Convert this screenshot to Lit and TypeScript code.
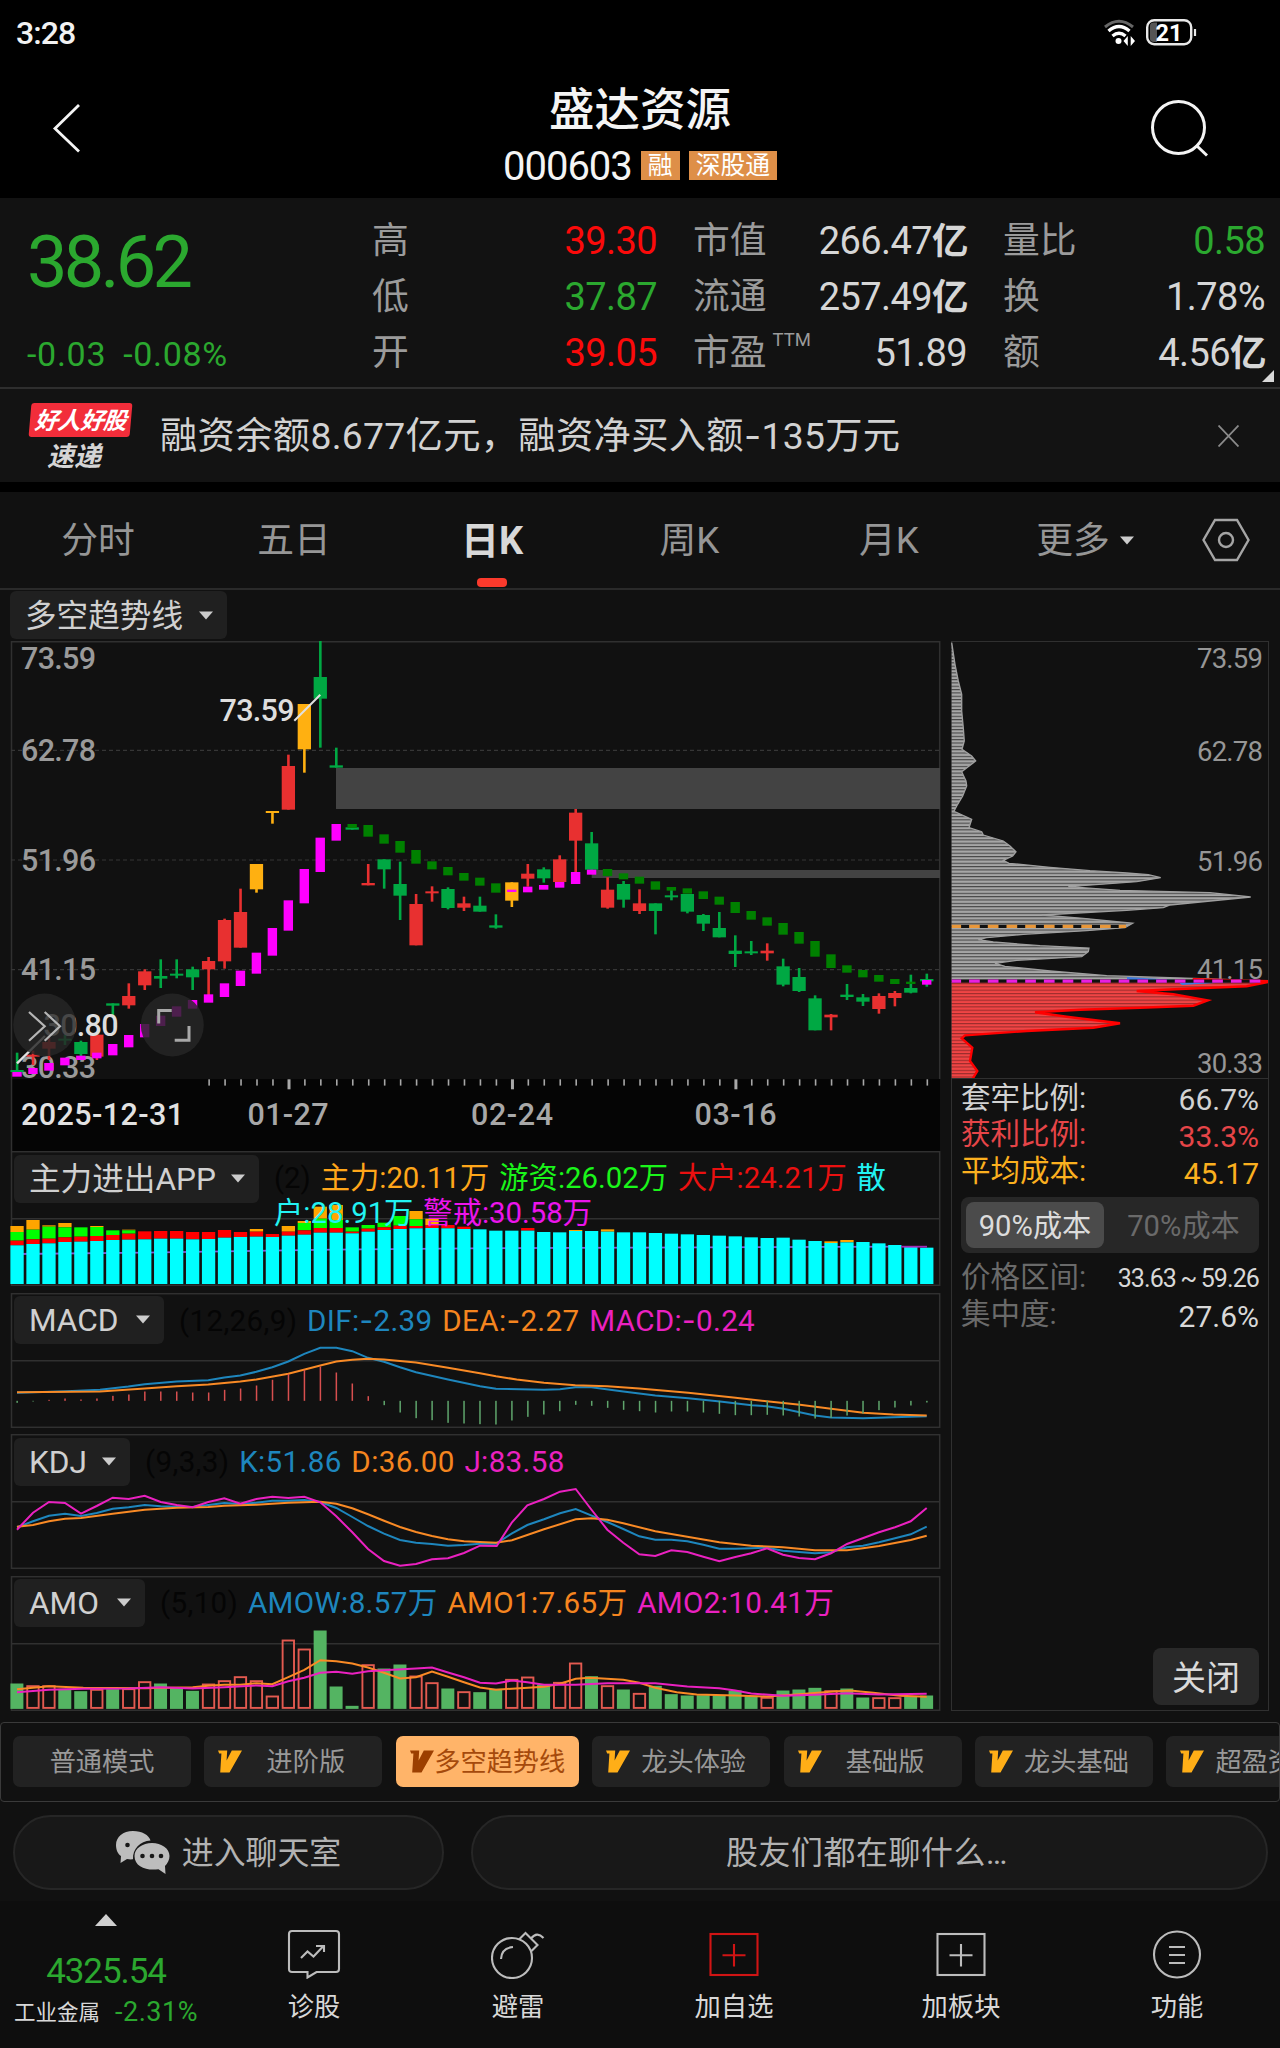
import { LitElement, html, css, svg } from "lit";
import { customElement } from "lit/decorators.js";

type Pt = [number, number];
type Candle = [string, number, number, number, number];

const TONE: Record<string, string> = { r: "#e83030", g: "#00a843", y: "#ffb011", m: "#ff00ff", d: "#008000" };

/* Chart series are stored in thirds of a pixel; each chart has its own vertical origin. */
const cx = (n: number) => 17 + n * 15.96;
const line = (pts: Pt[], y0: number) => pts.map(([x, y]) => `${(x / 3).toFixed(1)},${(y0 + y / 3).toFixed(1)}`).join(" ");

/* tone, high, body top, body bottom, low */
const CANDLES: Candle[] = [
  ["g", 1268, 1320, 1326, 1326], ["r", 1262, 1274, 1280, 1305], ["r", 1222, 1236, 1256, 1290], ["g", 1215, 1226, 1232, 1245],
  ["g", 1232, 1236, 1272, 1280], ["r", 1214, 1214, 1280, 1290], ["g", 1120, 1120, 1127, 1160], ["r", 1060, 1098, 1126, 1136],
  ["r", 1018, 1024, 1066, 1080], ["g", 988, 1038, 1046, 1074], ["g", 988, 1031, 1037, 1045], ["g", 1010, 1018, 1042, 1080],
  ["r", 981, 993, 1018, 1095], ["r", 866, 870, 994, 1016], ["r", 776, 846, 953, 953], ["y", 702, 702, 778, 788],
  ["y", 543, 543, 549, 581], ["r", 374, 408, 539, 539], ["y", 222, 222, 358, 428], ["g", 33, 141, 206, 353],
  ["g", 353, 406, 413, 413], ["g", 592, 592, 599, 599], ["r", 702, 759, 766, 766], ["g", 688, 688, 718, 776],
  ["g", 695, 762, 797, 870], ["r", 792, 822, 946, 946], ["r", 769, 784, 790, 815], ["g", 772, 777, 834, 838],
  ["r", 800, 820, 833, 843], ["g", 800, 827, 845, 845], ["g", 853, 886, 893, 896], ["y", 757, 757, 812, 831],
  ["r", 702, 731, 746, 770], ["g", 712, 718, 745, 758], ["r", 676, 688, 756, 756], ["r", 537, 548, 632, 726],
  ["g", 606, 640, 719, 719], ["r", 742, 779, 833, 836], ["g", 753, 762, 809, 833], ["r", 778, 820, 843, 852],
  ["g", 820, 820, 843, 913], ["g", 777, 796, 802, 811], ["g", 792, 792, 845, 850], ["g", 852, 855, 881, 903],
  ["g", 846, 894, 922, 922], ["g", 916, 962, 972, 1011], ["g", 933, 964, 970, 975], ["r", 940, 962, 970, 992],
  ["g", 986, 1009, 1064, 1069], ["g", 1014, 1041, 1083, 1086], ["g", 1096, 1105, 1201, 1201], ["r", 1152, 1154, 1162, 1201],
  ["g", 1062, 1094, 1101, 1110], ["g", 1092, 1102, 1115, 1128], ["r", 1090, 1098, 1137, 1151], ["r", 1083, 1089, 1104, 1129],
  ["g", 1034, 1074, 1088, 1090], ["g", 1031, 1047, 1054, 1070],
];

/* top and bottom of each trend block */
const TREND: Pt[] = [
  [1326, 1340], [1314, 1332], [1299, 1322], [1283, 1306], [1277, 1290], [1268, 1285], [1242, 1276], [1215, 1252], [1182, 1222],
  [1157, 1188], [1129, 1160], [1110, 1136], [1093, 1118], [1060, 1101], [1022, 1068], [968, 1031], [894, 977], [811, 902],
  [717, 820], [623, 726], [582, 632], [582, 594], [585, 620], [613, 641], [633, 668], [660, 701], [694, 718], [711, 736],
  [729, 752], [743, 767], [760, 788], [779, 786], [770, 787], [765, 779], [756, 773], [726, 762], [719, 734], [717, 738],
  [730, 748], [740, 761], [754, 779], [771, 782], [775, 791], [784, 807], [800, 824], [816, 849], [843, 869], [862, 887],
  [879, 914], [906, 941], [933, 980], [973, 1014], [1006, 1028], [1020, 1042], [1035, 1055], [1047, 1062], [1055, 1062], [1050, 1064],
];
const trendTone = (n: number) => (n <= 20 || (n >= 31 && n <= 36) || n === 57 ? "m" : "d");

/* tops of the stacked main-force layers: yellow, green, red, cyan */
const FLOW: number[][] = [
  [258, 276, 302, 316], [240, 269, 298, 312], [256, 260, 296, 310], [249, 262, 292, 306], [262, 262, 290, 305], [258, 261, 288, 303],
  [271, 271, 285, 300], [269, 271, 281, 299], [274, 274, 274, 298], [273, 273, 273, 296], [273, 273, 273, 296], [276, 276, 276, 298],
  [276, 276, 276, 297], [270, 270, 270, 293], [276, 276, 276, 291], [267, 275, 275, 290], [282, 282, 282, 291], [258, 275, 275, 287],
  [243, 249, 271, 284], [200, 236, 264, 278], [195, 240, 264, 278], [262, 262, 275, 280], [255, 255, 266, 275], [248, 248, 262, 270],
  [228, 228, 257, 267], [213, 238, 258, 265], [236, 255, 255, 264], [255, 255, 255, 265], [260, 260, 260, 267], [268], [272], [272],
  [264, 264, 264, 272], [276], [277], [270, 273], [273], [268, 275], [277], [277], [279], [281], [283], [285], [287], [289], [292],
  [294], [293], [299], [303], [304, 309], [300, 307], [306], [310], [315], [319], [323],
];

const HIST = [
  787, 783, 778, 774, 777, 774, 766, 762, 753, 753, 753, 756, 756, 748, 744, 735, 718, 700, 688, 678, 696, 729, 767, 794, 816, 833,
  839, 847, 849, 851, 852, 840, 829, 822, 812, 793, 796, 802, 808, 812, 816, 813, 813, 816, 820, 824, 824, 823, 825, 828, 834, 832,
  825, 819, 809, 801, 795, 786,
];
const DIF: Pt[] = [[51, 757], [200, 752], [300, 748], [385, 738], [434, 731], [530, 723], [625, 719], [673, 711], [721, 705], [769, 694], [817, 680], [865, 663], [913, 640], [961, 622], [1009, 622], [1057, 632], [1104, 652], [1152, 664], [1200, 680], [1248, 695], [1344, 717], [1440, 737], [1488, 745], [1632, 748], [1680, 746], [1726, 740], [1774, 740], [1870, 753], [1966, 765], [2065, 773], [2160, 783], [2255, 794], [2300, 797], [2350, 805], [2445, 825], [2493, 831], [2590, 833], [2680, 830], [2780, 827]];
const DEA: Pt[] = [[51, 755], [300, 753], [434, 744], [530, 737], [625, 732], [721, 723], [769, 717], [865, 700], [961, 675], [1009, 663], [1057, 658], [1104, 655], [1152, 657], [1248, 666], [1344, 682], [1440, 698], [1488, 707], [1550, 717], [1632, 727], [1726, 734], [1822, 737], [1918, 744], [2065, 757], [2200, 771], [2300, 782], [2400, 793], [2493, 805], [2590, 817], [2680, 822], [2780, 825]];

const KLINE: Pt[] = [[51, 292], [99, 274], [147, 257], [195, 251], [243, 258], [290, 249], [338, 236], [386, 232], [434, 225], [482, 229], [530, 230], [578, 231], [625, 225], [673, 219], [721, 222], [769, 218], [817, 212], [865, 212], [913, 210], [961, 216], [1009, 234], [1057, 261], [1104, 288], [1152, 311], [1200, 330], [1248, 338], [1296, 342], [1344, 347], [1392, 345], [1440, 341], [1488, 341], [1536, 310], [1582, 285], [1632, 268], [1680, 250], [1727, 237], [1775, 257], [1822, 276], [1870, 297], [1918, 319], [1966, 329], [2014, 329], [2062, 334], [2110, 344], [2158, 356], [2206, 356], [2254, 355], [2301, 353], [2349, 362], [2397, 366], [2445, 370], [2493, 367], [2541, 352], [2589, 347], [2637, 337], [2685, 325], [2732, 313], [2780, 290]];
const DLINE: Pt[] = [[51, 290], [99, 285], [147, 274], [195, 266], [243, 264], [338, 251], [434, 239], [530, 233], [625, 231], [673, 227], [769, 224], [865, 218], [961, 215], [1009, 221], [1057, 235], [1104, 253], [1152, 272], [1200, 291], [1248, 306], [1296, 318], [1344, 328], [1392, 334], [1488, 338], [1536, 331], [1632, 298], [1727, 268], [1775, 265], [1822, 269], [1870, 280], [1966, 304], [2062, 320], [2158, 337], [2254, 347], [2349, 352], [2445, 361], [2541, 361], [2589, 355], [2637, 348], [2732, 330], [2780, 317]];
const JLINE: Pt[] = [[51, 299], [99, 248], [147, 216], [195, 219], [243, 251], [290, 228], [338, 203], [386, 207], [434, 197], [482, 216], [530, 225], [578, 232], [625, 216], [673, 205], [721, 221], [769, 207], [817, 200], [865, 204], [913, 200], [961, 217], [1009, 259], [1057, 307], [1104, 357], [1152, 393], [1200, 407], [1248, 402], [1296, 388], [1344, 385], [1392, 369], [1440, 347], [1490, 348], [1536, 277], [1582, 226], [1632, 207], [1680, 185], [1727, 177], [1775, 240], [1822, 299], [1870, 338], [1918, 373], [1966, 378], [2014, 361], [2062, 366], [2110, 380], [2158, 394], [2206, 381], [2254, 370], [2301, 355], [2349, 374], [2397, 384], [2445, 388], [2493, 370], [2541, 342], [2637, 307], [2685, 292], [2732, 274], [2780, 234]];

const AMO = "g759 r767 r767 g775 g782 r778 g776 r776 r755 g759 g772 g781 r762 r752 r740 r752 r798 r630 r657 g600 g768 g826 r704 g714 g702 r738 r758 g774 r785 g785 g775 r748 r741 g762 r757 r699 g737 r767 g777 r790 g766 g791 g795 g794 g794 g780 g797 r802 g780 g777 g772 r782 g774 g801 r803 r803 g797 g795".split(" ");
const AMO1: Pt[] = [[51, 776], [147, 767], [250, 772], [434, 773], [578, 770], [625, 766], [673, 763], [721, 763], [769, 758], [817, 761], [865, 740], [913, 718], [961, 689], [1009, 692], [1057, 699], [1104, 711], [1152, 727], [1200, 744], [1248, 740], [1296, 723], [1344, 739], [1392, 755], [1440, 771], [1488, 778], [1560, 773], [1632, 769], [1680, 760], [1727, 745], [1770, 742], [1870, 748], [1918, 757], [1966, 772], [2030, 785], [2090, 792], [2206, 795], [2300, 798], [2397, 791], [2500, 783], [2550, 780], [2620, 787], [2700, 796], [2780, 799]];
const AMO2: Pt[] = [[51, 785], [147, 778], [250, 775], [386, 774], [482, 770], [578, 774], [673, 770], [769, 765], [817, 767], [865, 752], [913, 742], [961, 727], [1009, 724], [1057, 730], [1104, 722], [1152, 719], [1248, 714], [1296, 711], [1344, 726], [1392, 740], [1440, 757], [1488, 759], [1536, 750], [1582, 755], [1632, 763], [1727, 763], [1822, 758], [1966, 758], [2062, 768], [2158, 773], [2206, 780], [2254, 789], [2350, 796], [2445, 793], [2541, 788], [2637, 792], [2780, 790]];

const CHIPS_GRAY: Pt[] = [[35, 35], [45, 100], [55, 150], [65, 190], [65, 240], [70, 290], [73, 330], [66, 355], [95, 375], [107, 390], [65, 422], [78, 450], [80, 465], [68, 495], [50, 525], [42, 541], [95, 565], [87, 590], [125, 602], [130, 612], [190, 630], [210, 645], [228, 662], [218, 675], [190, 688], [207, 697], [330, 709], [450, 719], [560, 726], [625, 731], [662, 740], [590, 752], [385, 767], [540, 778], [810, 785], [932, 798], [690, 822], [670, 830], [560, 838], [305, 852], [430, 862], [578, 877], [555, 890], [440, 899], [250, 910], [140, 920], [115, 926], [160, 933], [300, 944], [447, 951], [445, 962], [425, 977], [230, 988], [165, 997], [195, 1006], [330, 1020], [500, 1034], [760, 1042], [985, 1050], [35, 1050]];
const CHIPS_RED: Pt[] = [[985, 1053], [920, 1066], [720, 1074], [590, 1080], [700, 1090], [803, 1108], [760, 1124], [600, 1130], [420, 1136], [285, 1144], [380, 1157], [540, 1177], [460, 1190], [260, 1200], [75, 1213], [65, 1222], [97, 1250], [90, 1290], [112, 1320], [97, 1345]];
const side = (pts: Pt[]) => pts.map(([x, y]) => `${(940 + x / 3).toFixed(1)},${(630 + y / 3).toFixed(1)}`).join(" ");

const AXIS: [string, number, number][] = [
  ["73.59", 669.3, 666.7], ["62.78", 761.3, 760.3], ["51.96", 870.7, 870.3], ["41.15", 980.3, 978.3], ["30.33", 1078.3, 1072.3],
];

const bar = (n: number, top: number, bottom: number, fill: string) =>
  svg`<rect x=${cx(n) - 6.6} y=${1140 + top / 3} width="13.3" height=${(bottom - top) / 3} fill=${fill}></rect>`;

const flowBar = (v: number[], n: number) => {
  const edges = v.length === 4 ? v : v.length === 2 ? [v[0], v[1], v[1], v[1]] : [v[0], v[0], v[0], v[0]];
  const fills = ["#ffa500", "#00ff00", "#ff0000", "#00ffff"];
  return edges.map((t, i) => {
    const b = i < 3 ? edges[i + 1] : 432;
    return b > t ? bar(n, t, b, fills[i]) : null;
  });
};

const caret = html`<svg class="caret" viewBox="0 0 14 9"><path d="M0 .5H14L7 8.5Z" fill="currentColor" /></svg>`;
const minus = html`<span class="minus">-</span>`;

@customElement("kline-chart")
class KlineChart extends LitElement {
  static styles = css`
    :host { display: block; height: 510px; }
    svg { display: block; }
    text { font-family: Roboto, "Noto Sans CJK SC", sans-serif; font-size: 30.5px; font-weight: 500; }
  `;
  render() {
    return html`<svg width="931" height="510" viewBox="10 641 931 510">
      <rect x="11" y="1079" width="929" height="72" fill="#050505" />
      <path d="M11.5 1151V641.7H939.7V1079" fill="none" stroke="#303030" stroke-width="1.5" />
      ${[750.3, 860, 969.7].map((y) => svg`<line x1="11" x2="939" y1=${y} y2=${y} stroke="#363636" stroke-width="1.2" stroke-dasharray="4 3"></line>`)}
      ${AXIS.map(([t, y]) => svg`<text x="21" y=${y} textLength="75" fill="#9a9a9a">${t}</text>`)}
      <rect x="336" y="768" width="604" height="41" fill="#434343" />
      <rect x="591.7" y="870" width="348.3" height="8" fill="#434343" />
      ${CANDLES.map(
        ([c, hi, t, b, lo], n) => svg`<g fill=${TONE[c]}>
          <rect x=${cx(n) - 1.2} y=${630 + hi / 3} width="2.6" height=${(lo - hi) / 3}></rect>
          <rect x=${cx(n) - 6.6} y=${630 + t / 3} width="13.3" height=${(b - t) / 3}></rect></g>`
      )}
      ${TREND.map(
        ([t, b], n) => svg`<rect x=${cx(n) - 4.7} y=${630 + t / 3} width="9.4" height=${(b - t) / 3} fill=${TONE[trendTone(n)]}></rect>`
      )}
      <text x="219.5" y="720.7" textLength="75" fill="#dedede">73.59</text>
      <path d="M294.3 720.7L320.3 694.7" stroke="#e0e0e0" stroke-width="2" />
      <text x="43.5" y="1036" textLength="75" fill="#dedede">30.80</text>
      <path d="M17 1063.3L45 1036" stroke="#e0e0e0" stroke-width="2.4" />
      <circle cx="44.7" cy="1025" r="31.5" fill="#262626" fill-opacity=".82" />
      <circle cx="172.3" cy="1025" r="31.5" fill="#262626" fill-opacity=".82" />
      <path d="M29 1012L44.7 1026.3L29 1040.7M44.7 1012L60 1026.3L44.7 1040.7" fill="none" stroke="#b5b5b5" stroke-width="2.2" />
      <path d="M171.7 1010.5H158.7V1023.5M189 1026V1040.3H174.7" fill="none" stroke="#a8a8a8" stroke-width="3" />
      ${CANDLES.map((_, n) => {
        const major = n === 17 || n === 31 || n === 45;
        return n < 12 ? null : svg`<rect x=${cx(n) - (major ? 0.8 : 0.2)} y="1079.3" width=${major ? 3 : 1.6} height=${major ? 10 : 6.3} fill="#a8a8a8"></rect>`;
      })}
      <text x="21" y="1125.3" textLength="163" fill="#e2e2e2" font-weight="600">2025-12-31</text>
      <text x="247.5" y="1125.3" textLength="81" fill="#a8a8a8">01-27</text>
      <text x="471" y="1125.3" textLength="82" fill="#a8a8a8">02-24</text>
      <text x="694.5" y="1125.3" textLength="82" fill="#a8a8a8">03-16</text>
    </svg>`;
  }
}

@customElement("chip-chart")
class ChipChart extends LitElement {
  static styles = css`
    :host { display: block; height: 438px; }
    svg { display: block; }
    text { font-family: Roboto, sans-serif; font-size: 27.5px; }
  `;
  render() {
    return html`<svg width="318" height="438" viewBox="951 641 318 438">
      <defs>
        <pattern id="hg" width="4" height="3.34" patternUnits="userSpaceOnUse"><rect width="4" height="3.34" fill="#a6a6a6" /><rect width="4" height="1.1" fill="#474747" /></pattern>
        <pattern id="hr" width="4" height="3.34" patternUnits="userSpaceOnUse"><rect width="4" height="3.34" fill="#f04545" /><rect width="4" height="1.1" fill="#9a2c2c" /></pattern>
      </defs>
      <polygon points=${side(CHIPS_GRAY)} fill="url(#hg)" />
      <polyline points=${side(CHIPS_GRAY.slice(0, -1))} fill="none" stroke="#a0a0a0" stroke-width="1.3" />
      <polygon points=${side([[35, 1053], ...CHIPS_RED, [35, 1345]])} fill="url(#hr)" />
      ${AXIS.map(([t, , y]) => svg`<text x="1197" y=${y} textLength="66" fill="#969696">${t}</text>`)}
      <polyline points=${side(CHIPS_RED)} fill="none" stroke="#ff0000" stroke-width="2.4" />
      <path d="M1127 976L1193 980H1127Z M1178 981L1232 981L1182 984Z" fill="#3d7be0" />
      <path d="M1193 977.5L1268.5 979.5V981.5L1193 979.5Z" fill="#ff0000" stroke="#ff0000" />
      <path d="M951.7 925.3H1126" stroke="#111" stroke-width="3.2" />
      <path d="M951.7 925.3H1126" stroke="#e8973a" stroke-width="3.2" stroke-dasharray="10.7 8" stroke-dashoffset="1.3" />
      <path d="M951.7 980.2H1260" stroke="#111" stroke-width="3.2" />
      <path d="M951.7 980.2H1268" stroke="#e81fe0" stroke-width="3.2" stroke-dasharray="10.7 8" stroke-dashoffset="1.3" />
    </svg>`;
  }
}

@customElement("app-root")
class AppRoot extends LitElement {
  static styles = css`
    :host { display: block; width: 1280px; height: 2048px; overflow: hidden; background: #111; color: #d2d2d2;
      font-family: Roboto, "Noto Sans CJK SC", sans-serif; line-height: 1; white-space: nowrap; }
    * { box-sizing: border-box; }
    svg { display: block; flex: none; }
    .minus { font-family: Inter, Roboto, sans-serif; }
    .status { height: 66px; background: #000; display: flex; align-items: center; padding: 0 83px 0 16px; color: #f2f2f2; }
    .clock { flex: 1; font-size: 32px; font-weight: 500; letter-spacing: -0.9px; }
    .header { height: 132px; background: #000; display: grid; grid-template-columns: 130px 1fr 130px; color: #f4f4f4; }
    .heading { display: flex; flex-direction: column; align-items: center; padding-top: 20px; }
    .name { font-size: 45.5px; height: 51px; line-height: 50px; font-weight: 500; }
    .code { display: flex; align-items: center; height: 60px; gap: 9px; }
    .num { font-size: 40px; letter-spacing: -1px; }
    .tag { background: #de8f48; font-size: 24.8px; line-height: 30px; height: 29px; padding: 0 7px; color: #fff; margin-top: -3px; }
    .quote { height: 189px; background: #121212; display: grid; grid-template-columns: 345px 312px 310px 298px; padding-right: 15px; }
    .price { padding: 31px 0 0 27px; color: #2ba82f; }
    .last { font-size: 72px; height: 68px; line-height: 68px; letter-spacing: -3.7px; font-weight: 450; }
    .chg { display: flex; gap: 17px; font-size: 34px; margin-top: 40px; line-height: 34px; height: 34px; letter-spacing: 0.7px; }
    .grid { display: grid; grid-template-rows: repeat(3, 56px); padding-top: 15px; }
    .kv { display: flex; align-items: center; justify-content: space-between; font-size: 36.8px; color: #9b9b9b; }
    .kv.a { padding-left: 27px; }
    .kv.b { padding-left: 36px; }
    .kv b { font-weight: 450; font-size: 38px; color: #d6d6d6; letter-spacing: -0.6px; }
    .kv i { font-style: normal; font-size: 36.5px; font-weight: 700; letter-spacing: 0; margin-right: -1.5px; }
    .kv sup { font-size: 18.5px; align-self: flex-start; margin: 6px auto 0 6px; }
    .kv .up { color: #fb0a0a; }
    .kv .down { color: #2ba82f; }
    .corner { width: 12px; height: 12px; margin: -17px 6px 5px auto; }
    .notice { height: 95px; border-top: 2px solid #2e2e2e; display: flex; align-items: center; padding: 0 41px 0 28px; background: #131313; }
    .promo { width: 104px; display: flex; flex-direction: column; align-items: center; font-family: "Noto Sans CJK SC"; font-weight: 700; font-style: italic; }
    .promo-a { background: #f22d3a; color: #fff; width: 101px; height: 34px; line-height: 32px; font-size: 23.5px; text-align: center; letter-spacing: -0.6px; transform: skewX(-5deg); border-radius: 3px; }
    .promo-b { font-size: 27px; height: 31px; line-height: 35px; margin-right: 12px; color: #d5d5d5; }
    .msg { flex: 1; font-size: 37.3px; padding: 2px 0 0 28px; letter-spacing: 0.3px; }
    .tabs { height: 108px; border-top: 10px solid #000; border-bottom: 2px solid #2a2a2a; display: grid; grid-template-columns: 196px 196px 200px 195px 204px 180px 109px; color: #969696; font-size: 36.8px; }
    .tab { display: flex; flex-direction: column; align-items: center; padding-top: 31px; }
    .tab.row { flex-direction: row; align-items: flex-start; justify-content: center; gap: 10px; padding-left: 8px; }
    .tab.row .caret { margin-top: 13px; }
    .tab.on { color: #d8d8d8; font-weight: 700; font-size: 38px; line-height: 37px; }
    .tab.on::after { content: ""; width: 30px; height: 9px; border-radius: 4px; background: #fb3a2c; margin-top: 18px; }
    .caret { width: 14px; height: 9px; color: #ccc; }
    .picker { display: flex; align-items: center; justify-content: space-between; background: #202020; border-radius: 6px; color: #d0d0d0; height: 48px; font-size: 31.6px; padding: 0 14px 0 15px; }
    .picker span { padding-top: 3px; }
    .main-pick { margin: 1px 0 2px 10px; width: 217px; }
    .body { display: grid; grid-template-columns: 931px 318px; gap: 10px; padding-left: 10px; height: 1070px; }
    .left { display: flex; flex-direction: column; gap: 6.6px; }
    .panel { display: grid; width: 931px; height: 135px; }
    .panel > * { grid-area: 1 / 1; }
    kline-chart { margin-bottom: -6.6px; }
    .bar { display: flex; align-items: flex-start; padding: 3.5px 0 0 4px; }
    .bar .picker { margin-right: 15px; padding: 0 14px 1px 15px; flex: none; }
    .w1 { width: 245px; } .w2 { width: 150px; } .w3 { width: 116px; } .w4 { width: 131px; }
    .legend { font-size: 29.3px; line-height: 35px; padding-top: 6px; color: #050505; letter-spacing: 0.02px; word-spacing: 2.6px; }
    .legend.p { padding-top: 7px; font-size: 29.6px; letter-spacing: 0.35px; word-spacing: 2px; }
    .c1 { color: #1e86bd; } .c2 { color: #f5851f; } .c3 { color: #ea21c0; }
    .f1 { color: #ffa61a; } .f2 { color: #1af51a; } .f3 { color: #ea1010; } .f4 { color: #22f3f3; } .f5 { color: #ec14ec; }
    .right { border: 1.5px solid #303030; height: 1070px; display: flex; flex-direction: column; margin-left: 0; }
    .right chip-chart { border-bottom: 1.5px solid #303030; height: 437px; overflow: hidden; margin-left: -1px; }
    .stats { display: flex; flex-direction: column; padding: 1px 9px 0 9px; flex: 1; }
    .st { display: flex; justify-content: space-between; align-items: center; height: 36.8px; font-size: 29.5px; }
    .st b { font-weight: 450; font-size: 30px; padding-top: 4px; }
    .st.red { color: #e64548; } .st.gold { color: #fbb01f; }
    .st.dim span { color: #6a6a6a; } .st.dim b { color: #d8d8d8; }
    .st b.s { font-size: 25px; letter-spacing: -0.9px; word-spacing: -1px; padding-top: 2px; }
    .seg { display: grid; grid-template-columns: 138px 1fr; background: #272727; border-radius: 8px; height: 56px; margin: 7px 0 6px; padding: 5px; font-size: 29.2px; color: #6a6a6a; }
    .seg div { display: flex; align-items: center; justify-content: center; border-radius: 8px; padding: 2px 0 0 9px; }
    .seg .on { background: #4b4b4b; color: #dcdcdc; padding-left: 0; }
    .close { margin: auto 0 5px auto; width: 106px; height: 57px; border-radius: 8px; background: #292929; font-size: 34px; display: flex; align-items: center; justify-content: center; color: #dadada; padding-top: 2px; }
    .modes { margin-top: 11px; height: 80px; border: 1.5px solid #3a3a3a; border-radius: 4px; display: flex; align-items: center; gap: 13.4px; padding: 0 0 1px 12px; overflow: hidden; }
    .mode { flex: none; width: 178px; height: 51px; border-radius: 7px; background: #222; color: #999; font-size: 26.2px; display: flex; align-items: center; }
    .mode span { flex: 1; text-align: center; padding-top: 2px; }
    .mode svg { margin: 0 -13px 0 14px; color: #ffae17; width: 24px; }
    .mode.on { width: 183px; background: #ffb469; color: #a54a0c; }
    .mode.on svg { color: #9c3f00; }
    .chat { display: grid; grid-template-columns: 431px 797px; gap: 27px; padding: 13px 12px 0 13px; height: 99px; }
    .pill { height: 75px; border: 2px solid #262626; border-radius: 38px; background: #181818; display: flex; align-items: center; justify-content: center; gap: 12px; font-size: 31.9px; color: #b2b2b2; }
    .pill span { padding-top: 3px; }
    .pill.b { letter-spacing: 0.6px; padding-right: 5px; }
    .nav { height: 147px; background: #0e0e0e; display: grid; grid-template-columns: 212px 204px 204px 228px 226px 206px; color: #d8d8d8; }
    .idx { display: flex; flex-direction: column; align-items: center; padding-top: 13px; }
    .idx strong { font-size: 35px; font-weight: 400; color: #2ba82f; letter-spacing: -1.1px; margin-top: 28px; height: 36px; }
    .idx p { margin: 9px 0 0; display: flex; align-items: center; gap: 15px; font-size: 21.5px; }
    .idx p span { font-size: 27px; color: #2ba82f; letter-spacing: 0.5px; }
    .item { display: flex; flex-direction: column; align-items: center; font-size: 26.3px; padding-top: 26px; gap: 15px; }
  `;

  private panelFrame(y: number) {
    return svg`<rect x="11.5" y=${y + 0.7} width="928.2" height="133.6" fill="none" stroke="#303030" stroke-width="1.5"></rect>
      <line x1="11" x2="940" y1=${y + 67.7} y2=${y + 67.7} stroke="#303030" stroke-width="1.5"></line>`;
  }

  private flow() {
    return html`<div class="panel">
      <svg width="931" height="135" viewBox="10 1151 931 135">
        ${this.panelFrame(1151)}
        <polyline points=${line([[51, 342], [433, 338], [1000, 329], [1410, 325], [2700, 320]], 1140)} fill="none" stroke="#8a55d8" stroke-width="1.8" />
        ${FLOW.map(flowBar)}
        <path d="M901 1246.7H927" stroke="#a52ab5" stroke-width="1.8" />
      </svg>
      <div class="bar">
        <div class="picker w1"><span>主力进出APP</span>${caret}</div>
        <div class="legend">(2) <span class="f1">主力:20.11万</span> <span class="f2">游资:26.02万</span> <span class="f3">大户:24.21万</span> <span class="f4">散<br />户:28.91万</span> <span class="f5">警戒:30.58万</span></div>
      </div>
    </div>`;
  }

  private macd() {
    return html`<div class="panel">
      <svg width="931" height="135" viewBox="10 1292.5 931 135">
        ${this.panelFrame(1292.5)}
        <polyline points=${line(DIF, 1140)} fill="none" stroke="#1e86bd" stroke-width="2" />
        <polyline points=${line(DEA, 1140)} fill="none" stroke="#f98a25" stroke-width="2" />
        ${HIST.map((v, n) => svg`<rect x=${cx(n) - 0.6} y=${1140 + Math.min(v, 781) / 3} width="1.5" height=${Math.abs(v - 781) / 3} fill=${v < 781 ? "#d84f4f" : "#5fa56c"}></rect>`)}
      </svg>
      <div class="bar">
        <div class="picker w2"><span>MACD</span>${caret}</div>
        <div class="legend p">(12,26,9) <span class="c1">DIF:${minus}2.39</span> <span class="c2">DEA:${minus}2.27</span> <span class="c3">MACD:${minus}0.24</span></div>
      </div>
    </div>`;
  }

  private kdj() {
    return html`<div class="panel">
      <svg width="931" height="135" viewBox="10 1434 931 135">
        ${this.panelFrame(1434)}
        <polyline points=${line(KLINE, 1430)} fill="none" stroke="#1e86bd" stroke-width="2" />
        <polyline points=${line(DLINE, 1430)} fill="none" stroke="#f98a25" stroke-width="2" />
        <polyline points=${line(JLINE, 1430)} fill="none" stroke="#ea21c0" stroke-width="2" />
      </svg>
      <div class="bar">
        <div class="picker w3"><span>KDJ</span>${caret}</div>
        <div class="legend p">(9,3,3) <span class="c1">K:51.86</span> <span class="c2">D:36.00</span> <span class="c3">J:83.58</span></div>
      </div>
    </div>`;
  }

  private amo() {
    return html`<div class="panel">
      <svg width="931" height="135" viewBox="10 1575.5 931 135">
        ${this.panelFrame(1575.5)}
        ${AMO.map((s, n) => {
          const y = 1430 + +s.slice(1) / 3;
          const x = 10.4 + n * 15.96;
          return s[0] === "g"
            ? svg`<rect x=${x} y=${y} width="13" height=${1708.4 - y} fill="#54b462"></rect>`
            : svg`<rect x=${x + 0.9} y=${y} width="11.4" height=${1707.4 - y} fill="none" stroke="#e35a50" stroke-width="1.9"></rect>`;
        })}
        <polyline points=${line(AMO1, 1430)} fill="none" stroke="#f98a25" stroke-width="2" />
        <polyline points=${line(AMO2, 1430)} fill="none" stroke="#ea21c0" stroke-width="2" />
      </svg>
      <div class="bar">
        <div class="picker w4"><span>AMO</span>${caret}</div>
        <div class="legend p">(5,10) <span class="c1">AMOW:8.57万</span> <span class="c2">AMO1:7.65万</span> <span class="c3">AMO2:10.41万</span></div>
      </div>
    </div>`;
  }

  private mode(label: string, vip = true, on = false) {
    return html`<div class="mode ${on ? "on" : ""}">
      ${vip ? html`<svg width="24" height="23" viewBox="0 0 24 23"><path d="M0 .5H9.2L8.6 10.5L13.8 .5H24L11.5 22.5H2.2L3.4 3.6H1.2Z" fill="currentColor" /></svg>` : null}
      <span>${label}</span>
    </div>`;
  }

  render() {
    return html`
      <div class="status">
        <div class="clock">3:28</div>
        <svg width="94" height="30" viewBox="1103 18 94 30" fill="none">
          <path d="M1105 27Q1119 15.5 1133 27" stroke="#666" stroke-width="3" />
          <path d="M1108.5 31Q1119 22 1129.5 31" stroke="#fff" stroke-width="3.4" />
          <path d="M1112.5 36Q1119 30.5 1125.5 36" stroke="#fff" stroke-width="3.4" />
          <circle cx="1118.5" cy="41" r="3" fill="#fff" />
          <path d="M1123.5 41L1127.8 36V46ZM1135 41L1130.700 36V46Z" fill="#fff" />
          <rect x="1147.2" y="20.2" width="44" height="24" rx="7" stroke="#e8e8e8" stroke-width="2.4" />
          <path d="M1150 25.5Q1150 22.5 1154 22.5H1157V42H1154Q1150 42 1150 39Z" fill="#555" />
          <path d="M1195 29V36" stroke="#e8e8e8" stroke-width="2.2" />
          <text x="1169" y="40.500" text-anchor="middle" fill="#fff" font-family="Roboto" font-weight="700" font-size="23.500">21</text>
        </svg>
      </div>
      <div class="header">
        <svg width="130" height="132" viewBox="0 66 130 132"><path d="M79 105L55 128.5L79 151.5" fill="none" stroke="#f4f4f4" stroke-width="2.8" /></svg>
        <div class="heading">
          <div class="name">盛达资源</div>
          <div class="code"><span class="num">000603</span><span class="tag">融</span><span class="tag">深股通</span></div>
        </div>
        <svg width="130" height="132" viewBox="1150 66 130 132" fill="none" stroke="#f4f4f4" stroke-width="3"><circle cx="1178.5" cy="127.5" r="26" /><path d="M1197 146L1207 155.5" /></svg>
      </div>
      <div class="quote">
        <div class="price">
          <div class="last">38.62</div>
          <div class="chg"><span>-0.03</span><span>-0.08%</span></div>
        </div>
        <div class="grid">
          <div class="kv a">高<b class="up">39.30</b></div>
          <div class="kv a">低<b class="down">37.87</b></div>
          <div class="kv a">开<b class="up">39.05</b></div>
        </div>
        <div class="grid">
          <div class="kv b">市值<b>266.47<i>亿</i></b></div>
          <div class="kv b">流通<b>257.49<i>亿</i></b></div>
          <div class="kv b">市盈<sup>TTM</sup><b>51.89</b></div>
        </div>
        <div class="grid">
          <div class="kv b">量比<b class="down">0.58</b></div>
          <div class="kv b">换<b>1.78%</b></div>
          <div class="kv b">额<b>4.56<i>亿</i></b></div>
        </div>
      </div>
      <svg class="corner" viewBox="0 0 12 12"><path d="M12 0V12H0Z" fill="#d8d8d8" /></svg>
      <div class="notice">
        <div class="promo"><div class="promo-a">好人好股</div><div class="promo-b">速递</div></div>
        <div class="msg">融资余额8.677亿元，融资净买入额${minus}135万元</div>
        <svg width="21" height="22" viewBox="0 0 21 22"><path d="M.5 .5L20.5 21.5M20.5 .5L.5 21.5" stroke="#8a8a8a" stroke-width="1.8" /></svg>
      </div>
      <div class="tabs">
        <div class="tab">分时</div>
        <div class="tab">五日</div>
        <div class="tab on">日K</div>
        <div class="tab">周K</div>
        <div class="tab">月K</div>
        <div class="tab row">更多${caret}</div>
        <svg width="109" height="94" viewBox="1171 492 109 94" fill="none" stroke="#a5a5a5" stroke-width="2.4"><path d="M1215 520H1237L1248.5 540L1237 560H1215L1203.5 540Z" /><circle cx="1226" cy="540" r="7" /></svg>
      </div>
      <div class="picker main-pick"><span>多空趋势线</span>${caret}</div>
      <div class="body">
        <div class="left">
          <kline-chart></kline-chart>
          ${this.flow()} ${this.macd()} ${this.kdj()} ${this.amo()}
        </div>
        <div class="right">
          <chip-chart></chip-chart>
          <div class="stats">
            <div class="st"><span>套牢比例:</span><b>66.7%</b></div>
            <div class="st red"><span>获利比例:</span><b>33.3%</b></div>
            <div class="st gold"><span>平均成本:</span><b>45.17</b></div>
            <div class="seg"><div class="on">90%成本</div><div>70%成本</div></div>
            <div class="st dim"><span>价格区间:</span><b class="s">33.63 ~ 59.26</b></div>
            <div class="st dim"><span>集中度:</span><b>27.6%</b></div>
            <div class="close">关闭</div>
          </div>
        </div>
      </div>
      <div class="modes">
        ${this.mode("普通模式", false)} ${this.mode("进阶版")} ${this.mode("多空趋势线", true, true)} ${this.mode("龙头体验")}
        ${this.mode("基础版")} ${this.mode("龙头基础")} ${this.mode("超盈资金")}
      </div>
      <div class="chat">
        <div class="pill">
          <svg width="54" height="43" viewBox="0 0 54 43">
            <path d="M17 0C7 0 0 6 0 14C0 19 2 23 5 25L4.5 32L11 28C13 28.4 15 28.5 17 28.3C16.5 18 24 10 34.5 9.5C33 4 26 0 17 0Z" fill="#bdbdbd" />
            <path d="M36 12C45.500 12 53.500 17.500 53.500 25C53.500 29 51.500 32.500 49 35L49.500 43L42.500 38.200C31 40 18.500 36 18.500 25C18.500 17.500 26.500 12 36 12Z" fill="#bdbdbd" />
            <g fill="#181818"><circle cx="11.500" cy="14" r="2.300" /><circle cx="26.500" cy="25" r="2.300" /><circle cx="36" cy="25" r="2.300" /><circle cx="45" cy="25" r="2.300" /></g>
          </svg>
          <span>进入聊天室</span>
        </div>
        <div class="pill b"><span>股友们都在聊什么…</span></div>
      </div>
      <div class="nav">
        <div class="idx">
          <svg width="22" height="12" viewBox="0 0 22 12"><path d="M11 0L22 12H0Z" fill="#d0d0d0" /></svg>
          <strong>4325.54</strong>
          <p>工业金属<span>-2.31%</span></p>
        </div>
        <div class="item"><svg width="54" height="52" viewBox="0 0 54 52" fill="none" stroke="#bcbcbc" stroke-width="2.100"><path d="M5 4H49Q52 4 52 7V42Q52 45 49 45H29.500L20.500 50.500V45H5Q2 45 2 42V7Q2 4 5 4Z" /><path d="M14 31L20.500 24.500L26.500 29.500L36 19.500M29 19H37V25" /></svg>诊股</div>
        <div class="item"><svg width="54" height="52" viewBox="0 0 54 52" fill="none" stroke="#bcbcbc" stroke-width="2.100"><circle cx="21" cy="31" r="20" /><path d="M10 32Q10.500 21 22 20M28 12.500L34.500 6L46.500 18L40 24.500M40 11.500Q46 4 52.500 11" /></svg>避雷</div>
        <div class="item"><svg width="54" height="52" viewBox="0 0 54 52" fill="none" stroke="#d01414" stroke-width="2.100"><rect x="3.500" y="7" width="47" height="41" /><path d="M27 17V39.500M15.500 28.200H38.500" /></svg>加自选</div>
        <div class="item"><svg width="54" height="52" viewBox="0 0 54 52" fill="none" stroke="#bcbcbc" stroke-width="2.100"><rect x="3.500" y="7" width="47" height="41" /><path d="M27 17V39.500M15.500 28.200H38.500" /></svg>加板块</div>
        <div class="item"><svg width="54" height="52" viewBox="0 0 54 52" fill="none" stroke="#bcbcbc" stroke-width="2.100"><circle cx="27" cy="27.500" r="23" /><path d="M19 20H35M19 28H35M19 36H35" /></svg>功能</div>
      </div>
    `;
  }
}
